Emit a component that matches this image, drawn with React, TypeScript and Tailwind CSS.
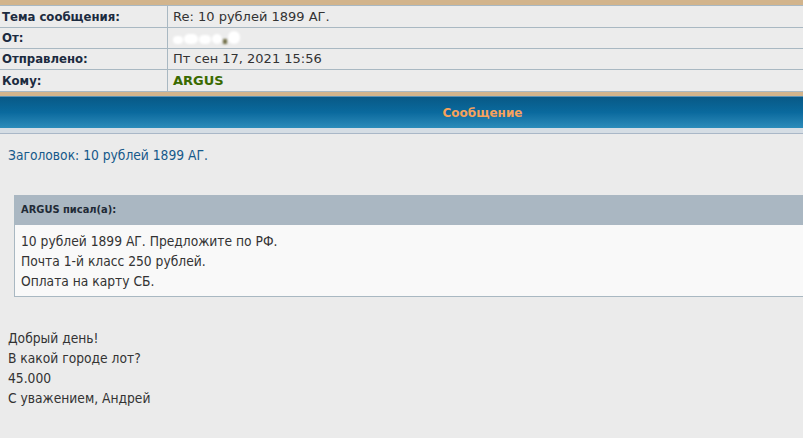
const rows = [
  { label: 'Тема сообщения:', value: 'Re: 10 рублей 1899 АГ.' },
  { label: 'От:', value: 'blur' },
  { label: 'Отправлено:', value: 'Пт сен 17, 2021 15:56' },
  { label: 'Кому:', value: 'ARGUS' },
];

const quoteLines = [
  '10 рублей 1899 АГ. Предложите по РФ.',
  'Почта 1-й класс 250 рублей.',
  'Оплата на карту СБ.',
];

const bodyLines = ['Добрый день!', 'В какой городе лот?', '45.000', 'С уважением, Андрей'];

const verdana = "font-['DejaVu_Sans',Verdana,sans-serif]";
const tahoma = "font-['DejaVu_Sans_Condensed','DejaVu_Sans',sans-serif]";

// smudged-out sender name
function Smudge() {
  return (
    <span className="inline-flex items-center gap-[1px] blur-[1px]">
      <span className="w-[10px] h-[8px] mt-[4px] rounded-full bg-white" />
      <span className="w-[14px] h-[10px] mt-[2px] rounded-full bg-white" />
      <span className="w-[12px] h-[9px] mt-[3px] rounded-full bg-white" />
      <span className="w-[10px] h-[10px] mt-[2px] rounded-full bg-white" />
      <span className="w-[4px] h-[5px] mt-[6px] bg-[#6f6c44]" />
      <span className="w-[12px] h-[13px] mb-[2px] rounded-full bg-white" />
    </span>
  );
}

export default function App() {
  return (
    <div className="w-[803px] h-[438px] overflow-hidden bg-[#ebebeb]">
      {/* Header table */}
      <div className="h-[5px] bg-[#d2b48c]" />
      <div className={`border-t border-[#a9b8c2] ${verdana} text-[13px]`}>
        {rows.map((r, i) => (
          <div
            key={r.label}
            className={`grid grid-cols-[168px_1fr] bg-[#ececec] border-b border-[#a9b8c2] ${i === 0 || i === 3 ? 'h-[22px]' : 'h-[21px]'}`}
          >
            <div className={`flex items-center pl-[2px] border-r border-[#a9b8c2] ${tahoma} text-[13px] font-bold text-[#1c2b40]`}>
              {r.label}
            </div>
            <div className="flex items-center pl-[5px] text-[#333]">
              {r.value === 'blur' ? (
                <Smudge />
              ) : r.value === 'ARGUS' ? (
                <span className="font-bold text-[#3a6a00]">ARGUS</span>
              ) : (
                r.value
              )}
            </div>
          </div>
        ))}
      </div>
      <div className="h-[4px] bg-[#d2b48c]" />

      {/* Message header bar */}
      <div className="grid grid-cols-[168px_1fr] h-[32px] border-t border-[#5b92b5] bg-gradient-to-b from-[#085986] via-[#0a6a9e] to-[#2b8cba]">
        <div />
        <div className={`flex items-center justify-center pr-[6px] ${verdana} text-[12px] font-bold text-[#f7a25c]`}>
          Сообщение
        </div>
      </div>
      <div className="h-[6px] bg-[#d5dde4] border-b border-[#a9b7c7]" />

      {/* Content */}
      <div className={`${tahoma} text-[13.7px] leading-[20px]`}>
        <div className="pl-[8px] pt-[11px] text-[#16598a]">Заголовок: 10 рублей 1899 АГ.</div>

        <div className="ml-[14px] mt-[30px] border-l border-b border-[#a9b8c2]">
          <div className="h-[30px] flex items-center pl-[6px] bg-[#aab7c2] text-[11px] font-bold text-[#1f2a36]">
            ARGUS писал(а):
          </div>
          <div className="bg-[#f9f9f9] pl-[6px] pt-[6px] pb-[5px] text-[#333]">
            {quoteLines.map(l => (
              <div key={l}>{l}</div>
            ))}
          </div>
        </div>

        <div className="pl-[8px] pt-[31px] text-[#333]">
          {bodyLines.map(l => (
            <div key={l}>{l}</div>
          ))}
        </div>
      </div>
    </div>
  );
}
